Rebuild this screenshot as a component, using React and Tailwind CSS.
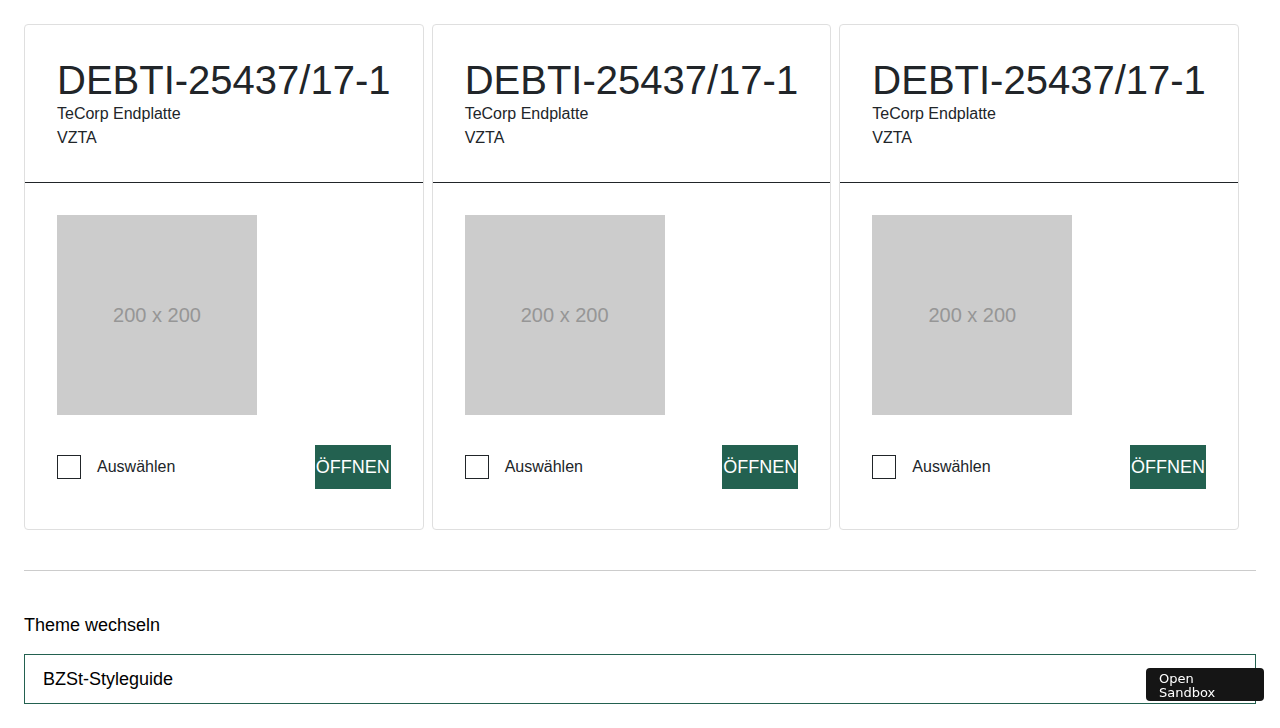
const items = [1, 2, 3];

const ProductCard = () => {
  return (
    <div className="border border-[#dfdfdf] rounded-[4px] bg-white">
      <div className="px-8 pt-[33px] pb-8 border-b border-[#212529]">
        <h2 className="text-[40px] leading-[44px] text-[#212529] whitespace-nowrap">
          DEBTI-25437/17-1
        </h2>
        <p className="text-base leading-6 text-[#212529]">TeCorp Endplatte</p>
        <p className="text-base leading-6 text-[#212529]">VZTA</p>
      </div>
      <div className="px-8 pt-8 pb-[40px]">
        <div className="w-[200px] h-[200px] bg-[#cccccc] flex items-center justify-center text-[20px] text-[#969696]">
          200 x 200
        </div>
        <div className="mt-[30px] flex items-center justify-between">
          <label className="flex items-center">
            <span className="w-6 h-6 border border-[#212529] bg-white" />
            <span className="ml-4 text-base text-[#212529]">Auswählen</span>
          </label>
          <button className="h-[44px] px-[1px] bg-[#236150] text-white text-[18px]">
            ÖFFNEN
          </button>
        </div>
      </div>
    </div>
  );
};

export default function App() {
  return (
    <div className="min-h-screen bg-white p-6 font-['Liberation_Sans',Arial,sans-serif]">
      <div className="w-[1215px] grid grid-cols-3 gap-2">
        {items.map((i) => (
          <ProductCard key={i} />
        ))}
      </div>

      <hr className="mt-10 border-0 border-t border-[#cccccc]" />

      <div className="mt-[40px]">
        <p className="text-[18px] leading-[28px] text-black">Theme wechseln</p>
        <div className="mt-[15px] h-[50px] border border-[#236150] flex items-center px-[18px] text-[18px] text-black">
          BZSt-Styleguide
        </div>
      </div>

      <div className="fixed right-[16px] bottom-[27px] w-[118px] h-[33px] rounded-[4px] bg-[#151515] text-white text-[13px] leading-[14px] px-[13px] pt-[4px] font-['DejaVu_Sans',sans-serif]">
        Open Sandbox
      </div>
    </div>
  );
}
